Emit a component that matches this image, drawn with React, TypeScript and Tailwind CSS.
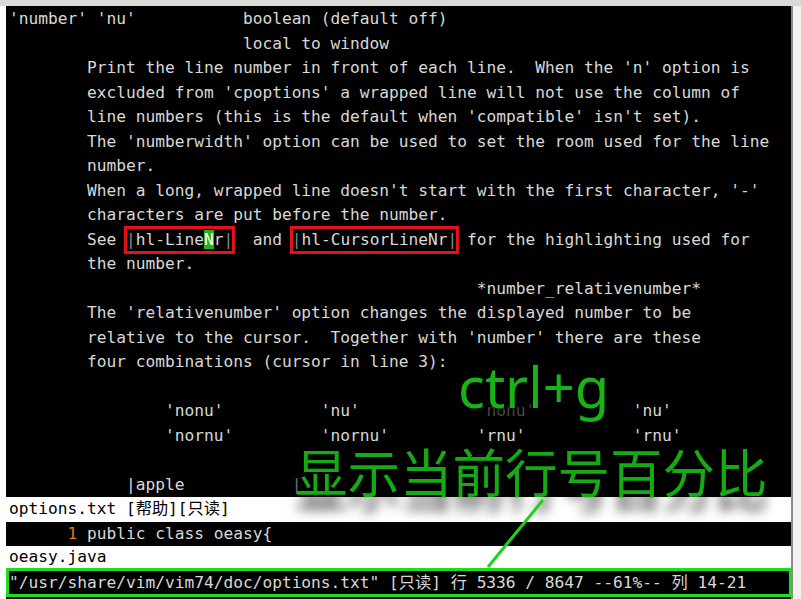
import React from "react"

const Row = ({ children, className = "" }: { children?: React.ReactNode, className?: string }) => (
  <div className={`h-[24.5px] leading-[24.5px] whitespace-pre ${className}`}>{children}</div>
)

const Bar = ({ children }: { children: React.ReactNode }) => <span className="text-[#8a8a8a]">{children}</span>

const App = () => {
  return (
    <div className="relative w-[801px] h-[599px] bg-[#f2f2f0] overflow-hidden">
      <div className="h-[6px] bg-[#d9d9d5]" />
      <div className="flex">
        <div className="w-[6px] bg-white" />
        <div className="w-[785px] h-[593px] bg-black pt-px text-[#d8d8d8] text-[16.2px] font-['DejaVu_Sans_Mono','Noto_Sans_CJK_SC',monospace]">
          <div className="pl-[3px]">
            <Row>{"'number' 'nu'           boolean (default off)"}</Row>
            <Row>{"                        local to window"}</Row>
            <Row>{"        Print the line number in front of each line.  When the 'n' option is"}</Row>
            <Row>{"        excluded from 'cpoptions' a wrapped line will not use the column of"}</Row>
            <Row>{"        line numbers (this is the default when 'compatible' isn't set)."}</Row>
            <Row>{"        The 'numberwidth' option can be used to set the room used for the line"}</Row>
            <Row>{"        number."}</Row>
            <Row>{"        When a long, wrapped line doesn't start with the first character, '-'"}</Row>
            <Row>{"        characters are put before the number."}</Row>
            <Row>
              {"        See "}
              <span className="inline-block outline-[3px] outline-solid outline-[#e3121a] -outline-offset-1">
                <Bar>|</Bar>hl-Line<span className="bg-[#1fb31f] text-white">N</span>r<Bar>|</Bar>
              </span>
              {"  and "}
              <span className="inline-block outline-[3px] outline-solid outline-[#e3121a] -outline-offset-1">
                <Bar>|</Bar>hl-CursorLineNr<Bar>|</Bar>
              </span>
              {" for the highlighting used for"}
            </Row>
            <Row>{"        the number."}</Row>
            <Row>{"                                                *number_relativenumber*"}</Row>
            <Row>{"        The 'relativenumber' option changes the displayed number to be"}</Row>
            <Row>{"        relative to the cursor.  Together with 'number' there are these"}</Row>
            <Row>{"        four combinations (cursor in line 3):"}</Row>
            <Row />
            <Row>
              {"                'nonu'          'nu'            "}
              <span className="text-[#4a4a4a]">'nonu'</span>
              {"          'nu'"}
            </Row>
            <Row>{"                'nornu'         'nornu'         'rnu'           'rnu'"}</Row>
            <Row />
            <Row>
              {"            |apple           "}
              <span className="text-[#777]">|</span>
            </Row>
          </div>
          <Row className="bg-white text-black pl-[3px]">options.txt [帮助][只读]</Row>
          <Row className="pl-[3px]">
            <span className="text-[#d9781e]">{"      1 "}</span>public class oeasy{"{"}
          </Row>
          <div className="h-[22px] leading-[22px] bg-white text-black pl-[3px] whitespace-pre">oeasy.java</div>
          <div className="h-[29px] leading-[23px] w-[786px] border-[3px] border-[#1fdc1f] whitespace-pre">
            {"\"/usr/share/vim/vim74/doc/options.txt\" [只读] 行 5336 / 8647 --61%-- 列 14-21"}
          </div>
        </div>
        <div className="w-[2px] h-[593px] bg-[#8c8c8c]" />
      </div>

      <div className="absolute left-[458px] top-[358px] text-[56px] leading-none text-[#17b317] font-['Noto_Sans',sans-serif] [text-shadow:0_0_6px_#000,0_0_3px_#000]">
        ctrl+g
      </div>

      <div className="absolute left-[295px] top-[444px] text-[52.5px] leading-none text-[#15ab15] font-['Noto_Sans_CJK_SC',sans-serif] [text-shadow:0_14px_12px_rgba(0,0,0,0.85)]">
        显示当前行号百分比
      </div>

      <svg className="absolute left-0 top-0" width="801" height="599">
        <line x1="488" y1="567" x2="543" y2="500" stroke="#1fd11f" strokeWidth="3" />
      </svg>
    </div>
  )
}

export default App
